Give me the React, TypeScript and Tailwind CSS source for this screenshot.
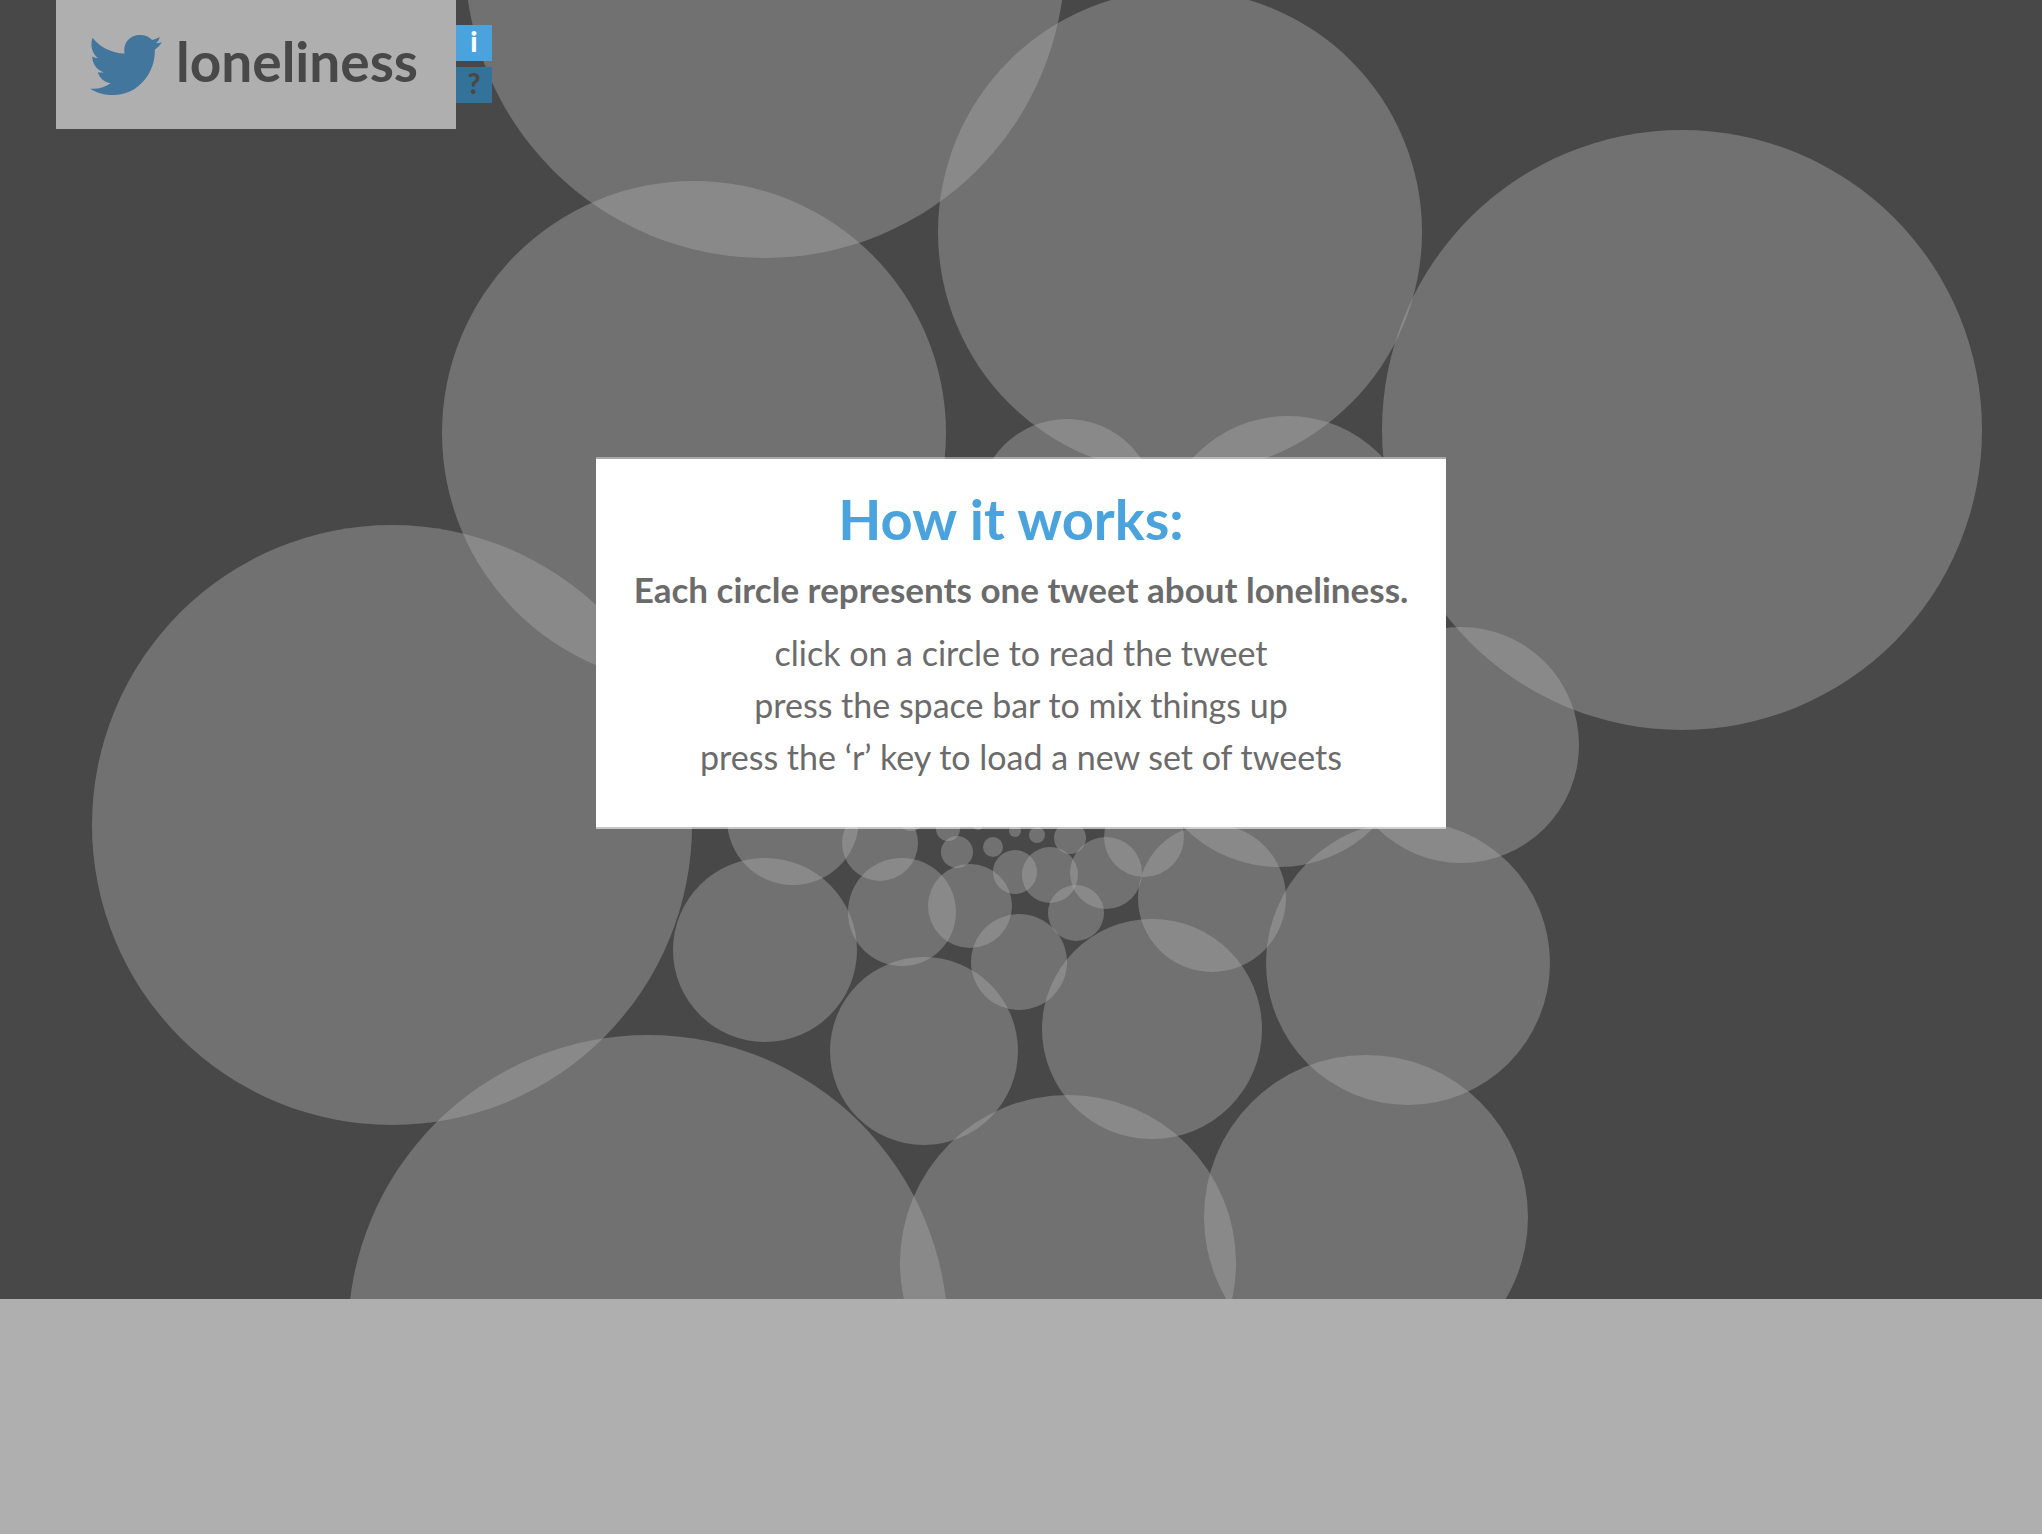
import React from "react";

const circles: [number, number, number][] = [
  [765, -42, 300], [1180, 232, 242], [1682, 430, 300], [694, 433, 252], [392, 825, 300],
  [648, 1335, 300], [1068, 1263, 168], [1366, 1217, 162], [1408, 963, 142], [1152, 1029, 110],
  [924, 1051, 94], [765, 950, 92], [902, 912, 54], [970, 906, 42], [1019, 962, 48],
  [1076, 913, 28], [1015, 872, 22], [1050, 875, 28], [1106, 873, 36], [1144, 837, 40],
  [1212, 898, 74], [1279, 733, 134], [1461, 745, 118], [1067, 508, 89], [1288, 545, 129],
  [793, 819, 66], [880, 843, 38], [957, 852, 16], [948, 829, 12], [993, 847, 10],
  [1015, 831, 6], [1037, 835, 8], [1070, 838, 16], [911, 817, 14], [978, 824, 6],
];

function Bird() {
  return (
    <svg viewBox="30 30 216 181" className="h-15 w-18 text-[#42769c]" aria-hidden="true">
      <path
        fill="currentColor"
        d="M37 38C58 66 95 84 134 86C128 52 152 30 180 30C196 30 208 36 217 45C225 43 233 40 240 36C238 45 234 50 228 55C234 55 240 54 246 52C241 61 234 68 225 74C227 145 175 211 100 211C74 211 50 205 30 192C54 194 76 188 92 175C73 173 59 161 53 142C59 144 65 144 71 142C49 136 37 117 36 95C42 98 48 100 54 100C34 85 30 58 37 38Z"
      />
    </svg>
  );
}

export default function App() {
  return (
    <div className="flex min-h-screen flex-col bg-[#afafaf] font-['Lato',sans-serif]">
      <main className="relative h-[1299px] overflow-hidden bg-[#484848]">
        <svg className="absolute inset-0 h-full w-full" aria-hidden="true">
          {circles.map(([x, y, r]) => (
            <circle key={`${x}-${y}`} cx={x} cy={y} r={r} fill="#afafaf" fillOpacity="0.4" />
          ))}
        </svg>
        <header className="relative flex items-start pl-14">
          <h1 className="flex h-[129px] w-[400px] items-center gap-3.5 bg-[#afafaf] pl-[34px] text-[55px] leading-none font-bold text-[#484848]">
            <Bird />
            <span className="pb-1.5">loneliness</span>
          </h1>
          <div className="flex flex-col gap-1.5 pt-[25px] text-[28px] leading-8 font-black">
            <button className="flex size-9 justify-center bg-[#4aa3dd] text-white" aria-label="About">i</button>
            <button className="flex size-9 justify-center bg-[#337299] text-[#484848]" aria-label="Help">?</button>
          </div>
        </header>
      </main>
      <div className="pointer-events-none absolute inset-x-0 top-[457px] flex justify-center">
        <section
          role="dialog"
          aria-labelledby="how"
          className="pointer-events-auto w-[850px] border-y-2 border-t-white/40 border-b-white/60 bg-white bg-clip-padding pt-7 pb-11 text-center text-[34px] leading-[52px] text-[#6b6b6b]"
        >
          <h2 id="how" className="pr-5 text-[56px] leading-[64px] font-bold text-[#4aa3dd]">How it works:</h2>
          <p className="mt-3 text-[35px] font-bold">Each circle represents one tweet about loneliness.</p>
          <div className="mt-3">
            <p>click on a circle to read the tweet</p>
            <p>press the space bar to mix things up</p>
            <p>press the ‘r’ key to load a new set of tweets</p>
          </div>
        </section>
      </div>
    </div>
  );
}
